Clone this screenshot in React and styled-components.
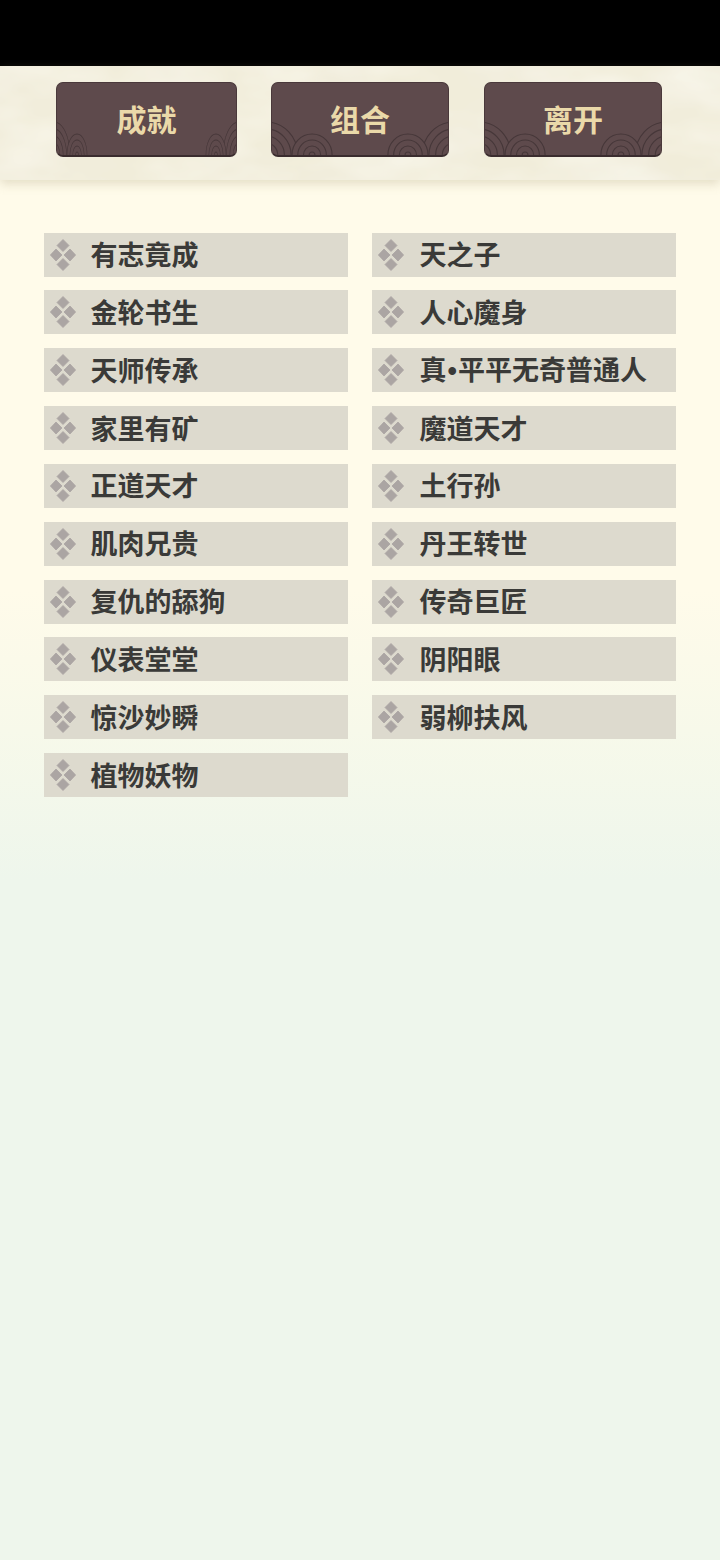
import React from "react";
import styled, { createGlobalStyle } from "styled-components";

const Global = createGlobalStyle`
  html, body { margin: 0; padding: 0; }
  body { background: #eef6ec; font-family: "Noto Sans CJK SC", "Noto Sans", sans-serif; }
`;

const Page = styled.div`
  width: 720px;
  height: 1560px;
  overflow: hidden;
  display: flex;
  flex-direction: column;
  background: linear-gradient(180deg, #fffbea 0, #fffbea 590px, #f7f9ea 730px, #eef6ec 880px, #eef6ec 100%);
`;

const StatusBar = styled.div`
  height: 66px;
  flex: none;
  background: #000;
`;

const Toolbar = styled.div`
  position: relative;
  height: 114px;
  flex: none;
  box-sizing: border-box;
  display: flex;
  align-items: flex-start;
  padding: 16px 0 0 56px;
  box-shadow: 0 4px 10px rgba(165, 155, 115, 0.3);
  background: #f1edda;
`;

const Parchment = styled.svg`
  position: absolute;
  left: 0;
  top: 0;
  width: 720px;
  height: 114px;
`;

const Button = styled.div`
  position: relative;
  box-sizing: border-box;
  width: ${(p) => p.$w}px;
  height: 75px;
  margin-right: ${(p) => p.$gap}px;
  flex: none;
  overflow: hidden;
  display: flex;
  align-items: center;
  justify-content: center;
  background: #5e4a4c;
  border: 1px solid #4a393b;
  border-bottom: 2px solid #3a2c2e;
  border-radius: 7px;
`;

const ButtonLabel = styled.span`
  position: relative;
  z-index: 1;
  margin-top: -2px;
  font-size: 30px;
  font-weight: 700;
  line-height: 1;
  color: #ead9a9;
`;

const Corner = styled.svg`
  position: absolute;
  bottom: 0;
  ${(p) => (p.$right ? "right: 0; transform: scaleX(-1);" : "left: 0;")}
  width: ${(p) => p.$w}px;
  height: 36px;
`;

const List = styled.div`
  display: grid;
  grid-template-columns: 304px 304px;
  column-gap: 24px;
  grid-auto-rows: 44px;
  row-gap: 13.85px;
  padding: 52.5px 44px 0;
`;

const Row = styled.div`
  box-sizing: border-box;
  display: flex;
  align-items: center;
  padding-left: 6px;
  background: #dddace;
`;

const Bullet = styled.svg`
  width: 26px;
  height: 32px;
  flex: none;
  margin-right: ${(p) => p.$gap}px;
`;

const RowLabel = styled.span`
  margin-top: -1px;
  font-size: 27px;
  font-weight: 700;
  line-height: 44px;
  color: #3a3a38;
  white-space: nowrap;
`;

const Dot = styled.span`
  font-family: "Liberation Sans", sans-serif;
  padding: 0 1px;
`;

const Scallop = ({ cx, radii }) => (
  <g>
    {radii.map((r, i) => (
      <circle key={r} cx={cx} cy={36} r={r} fill={i === 0 ? "#5e4a4c" : "none"} stroke="#463739" strokeWidth="1.2" />
    ))}
  </g>
);

const ButtonCorner = ({ w, right }) => (
  <Corner $w={w} $right={right} viewBox="0 0 65 36" preserveAspectRatio="none">
    <Scallop cx={-6} radii={[33, 26, 19, 12]} />
    <Scallop cx={42} radii={[21, 15, 9, 3]} />
  </Corner>
);

const Diamonds = ({ gap }) => (
  <Bullet $gap={gap} viewBox="0 0 26 32">
    <g fill="#aba5a3" stroke="#aba5a3" strokeWidth="0.8" strokeLinejoin="round">
      <polygon points="13,0.5 19,6.5 13,12.5 7,6.5" />
      <polygon points="13,19.5 19,25.5 13,31.5 7,25.5" />
      <polygon points="6,10 12,16 6,22 0.4,16" />
      <polygon points="20,10 25.6,16 20,22 14,16" />
    </g>
  </Bullet>
);

const buttons = [
  { label: "成就", w: 181, gap: 34, corner: 31 },
  { label: "组合", w: 178, gap: 35, corner: 62 },
  { label: "离开", w: 178, gap: 0, corner: 62 },
];

const left = ["有志竟成", "金轮书生", "天师传承", "家里有矿", "正道天才", "肌肉兄贵", "复仇的舔狗", "仪表堂堂", "惊沙妙瞬", "植物妖物"];
const right = ["天之子", "人心魔身", ["真", <Dot key="d">•</Dot>, "平平无奇普通人"], "魔道天才", "土行孙", "丹王转世", "传奇巨匠", "阴阳眼", "弱柳扶风"];

const items = [];
left.forEach((t, i) => {
  items.push({ id: `l${i}`, t, gap: 14.5 });
  if (right[i]) items.push({ id: `r${i}`, t: right[i], gap: 15.5 });
});

export default function App() {
  return (
    <Page>
      <Global />
      <StatusBar />
      <Toolbar>
        <Parchment viewBox="0 0 720 114">
          <filter id="mottle" x="0" y="0" width="100%" height="100%">
            <feTurbulence type="fractalNoise" baseFrequency="0.012 0.025" numOctaves="3" seed="7" />
            <feColorMatrix
              type="matrix"
              values="0 0 0 0 1  0 0 0 0 0.99  0 0 0 0 0.94  0.9 0 0 0 -0.33"
            />
          </filter>
          <filter id="stain" x="0" y="0" width="100%" height="100%">
            <feTurbulence type="fractalNoise" baseFrequency="0.009 0.02" numOctaves="3" seed="21" />
            <feColorMatrix
              type="matrix"
              values="0 0 0 0 0.89  0 0 0 0 0.86  0 0 0 0 0.76  0.9 0 0 0 -0.36"
            />
          </filter>
          <rect width="720" height="114" filter="url(#stain)" />
          <rect width="720" height="114" filter="url(#mottle)" />
        </Parchment>
        {buttons.map((b) => (
          <Button key={b.label} $w={b.w} $gap={b.gap}>
            <ButtonCorner w={b.corner} />
            <ButtonCorner w={b.corner} right />
            <ButtonLabel>{b.label}</ButtonLabel>
          </Button>
        ))}
      </Toolbar>
      <List>
        {items.map((it) => (
          <Row key={it.id}>
            <Diamonds gap={it.gap} />
            <RowLabel>{it.t}</RowLabel>
          </Row>
        ))}
      </List>
    </Page>
  );
}
